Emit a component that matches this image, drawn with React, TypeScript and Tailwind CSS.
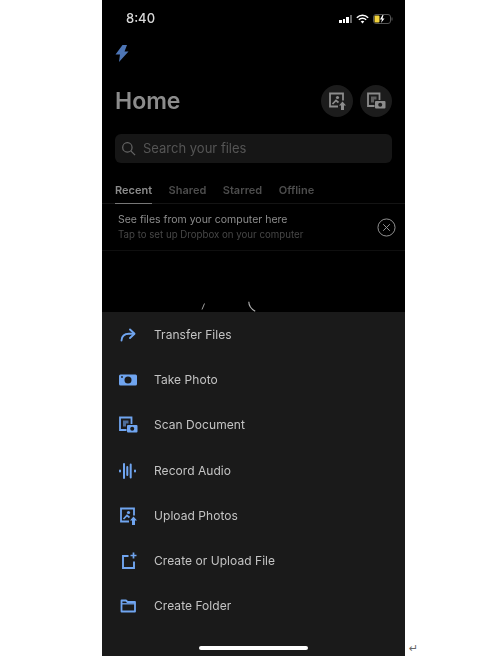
import type { ReactNode } from "react"

const BLUE = "#70a5f0"

function Svg({ children }: { children: ReactNode }) {
  return (
    <svg viewBox="0 0 20 20" fill="none" className="w-5 h-5">
      {children}
    </svg>
  )
}

function TransferIcon() {
  return (
    <Svg>
      <path d="M3.500 15.500C3.800 11 6.500 8.800 11 8.800h5" stroke={BLUE} strokeWidth="1.900" strokeLinecap="round" />
      <path d="M12 4.500 16.500 8.800 12 13" stroke={BLUE} strokeWidth="1.900" strokeLinecap="round" strokeLinejoin="round" />
    </Svg>
  )
}

function CameraIcon() {
  return (
    <Svg>
      <rect x="1" y="4.500" width="18" height="11" rx="1.500" fill={BLUE} />
      <circle cx="10" cy="10" r="3.500" fill="#1a1a1a" />
      <circle cx="4" cy="7" r="0.900" fill="#1a1a1a" />
    </Svg>
  )
}

function ScanIcon({ color = BLUE, hole = "#1a1a1a" }: { color?: string; hole?: string }) {
  return (
    <Svg>
      <path d="M8.500 15H2V2.500h11.500V9" stroke={color} strokeWidth="1.800" />
      <path d="M5 5.500h5.500v3H8v3H5Z" fill={color} opacity="0.6" />
      <rect x="9" y="10" width="10.500" height="7.500" rx="1" fill={color} />
      <circle cx="14.200" cy="13.800" r="2" fill={hole} />
    </Svg>
  )
}

function AudioIcon() {
  return (
    <Svg>
      <path d="M2 9.500v1M6 3v14M9.300 6v8M12.700 3.500v13M17 9.500v1" stroke={BLUE} strokeWidth="2" strokeLinecap="round" />
    </Svg>
  )
}

function UploadPhotoIcon({ color = BLUE }: { color?: string }) {
  return (
    <Svg>
      <path d="M11 15.500H3V2.500h13v7" stroke={color} strokeWidth="1.800" />
      <path d="M5.500 13 9 9.500l2.500 2" stroke={color} strokeWidth="1.700" />
      <circle cx="10.500" cy="6.500" r="1.600" fill={color} />
      <path d="M15.500 10.500 19 14.500h-2V19h-3v-4.500h-2Z" fill={color} />
    </Svg>
  )
}

function NewFileIcon() {
  return (
    <Svg>
      <path d="M10.500 5H5v12h11v-6.500" stroke={BLUE} strokeWidth="1.900" />
      <path d="M15.500 1.500v6M12.500 4.500h6" stroke={BLUE} strokeWidth="1.700" />
    </Svg>
  )
}

function FolderIcon() {
  return (
    <Svg>
      <path d="M3.500 4.500h4.500l1.500 1.500h7.500v9.500H3.500Z" stroke={BLUE} strokeWidth="1.800" strokeLinejoin="round" />
      <path d="M3.500 7.800h13.500" stroke={BLUE} strokeWidth="1.300" />
    </Svg>
  )
}

const actions = [
  { label: "Transfer Files", icon: <TransferIcon /> },
  { label: "Take Photo", icon: <CameraIcon /> },
  { label: "Scan Document", icon: <ScanIcon /> },
  { label: "Record Audio", icon: <AudioIcon /> },
  { label: "Upload Photos", icon: <UploadPhotoIcon /> },
  { label: "Create or Upload File", icon: <NewFileIcon /> },
  { label: "Create Folder", icon: <FolderIcon /> },
]

function StatusBar() {
  return (
    <div className="flex items-center justify-between h-[37px] pl-[24px] pr-[12px]">
      <span className="text-[13px] font-medium text-[#d8d8d8]">8:40</span>
      <div className="flex items-center gap-[4px] pt-[1px]">
        <div className="flex items-end gap-[1px] h-[8px]">
          <span className="w-[2.500px] h-[3px] bg-white" />
          <span className="w-[2.500px] h-[4px] bg-white" />
          <span className="w-[2.500px] h-[6px] bg-white" />
          <span className="w-[2.500px] h-[8px] bg-[#666]" />
        </div>
        <svg viewBox="0 0 16 12" className="w-[13px] h-[10px]" fill="none">
          <path d="M1 4.500c4-4 10-4 14 0M3.500 7c2.500-2.500 6.500-2.500 9 0" stroke="#fff" strokeWidth="1.800" />
          <path d="M8 11.500 5.800 9c1.200-1.100 3.200-1.100 4.400 0Z" fill="#fff" />
        </svg>
        <svg viewBox="0 0 20 10" className="w-[20px] h-[10px]" fill="none">
          <rect x="0.500" y="0.500" width="17" height="9" rx="2.500" stroke="#555" />
          <rect x="1.500" y="1.500" width="5" height="7" rx="1" fill="#f2d33c" />
          <path d="M9.500 1 7 5.500h2L8 9l3.500-4.500h-2L10.500 1Z" fill="#fff" />
          <rect x="18.500" y="3.500" width="1" height="3" fill="#555" />
        </svg>
      </div>
    </div>
  )
}

export default function App() {
  return (
    <div className="flex items-end w-[503px] h-[656px] bg-white overflow-hidden" style={{ fontFamily: "Inter, sans-serif" }}>
      <div className="flex flex-col w-[303px] h-full ml-[102px] blur-[0.4px]">
        {/* Dimmed home screen */}
        <div className="flex flex-col h-[312px] bg-black">
          <StatusBar />

          <div className="pl-[13px] pt-[8px]">
            <svg viewBox="0 0 14 17" className="w-[14px] h-[17px]">
              <path d="M7.500 0 0.500 9.500h4.500L4 17l9.500-10.500H9.500L12 0Z" fill="#4d75b5" />
            </svg>
          </div>

          <div className="flex items-center justify-between pl-[13px] pr-[13px] mt-[23px]">
            <h1 className="text-[23px] font-semibold leading-[32px] text-[#8c8c8c]">Home</h1>
            <div className="flex gap-[7px]">
              <div className="flex items-center justify-center w-[32px] h-[32px] rounded-full bg-[#1c1c1c]">
                <UploadPhotoIcon color="#8c8c8c" />
              </div>
              <div className="flex items-center justify-center w-[32px] h-[32px] rounded-full bg-[#1c1c1c]">
                <ScanIcon color="#8c8c8c" hole="#1c1c1c" />
              </div>
            </div>
          </div>

          <div className="flex items-center gap-[7px] h-[29px] mx-[13px] mt-[17px] px-[6px] rounded-[6px] bg-[#161616]">
            <svg viewBox="0 0 16 16" className="w-[15px] h-[15px]" fill="none">
              <circle cx="6.800" cy="6.800" r="5" stroke="#666" strokeWidth="1.300" />
              <path d="M10.500 10.500 15 15" stroke="#666" strokeWidth="1.300" />
            </svg>
            <span className="text-[13px] text-[#555]">Search your files</span>
          </div>

          <div className="flex gap-[16.500px] pl-[13px] mt-[17px] border-b border-[#141414] h-[24px]">
            <span className="h-[24px] text-[11px] font-semibold leading-[21px] text-[#8c8c8c] border-b border-[#777]">Recent</span>
            <span className="text-[11px] font-semibold leading-[21px] text-[#4d4d4d]">Shared</span>
            <span className="text-[11px] font-semibold leading-[21px] text-[#4d4d4d]">Starred</span>
            <span className="text-[11px] font-semibold leading-[21px] text-[#4d4d4d]">Offline</span>
          </div>

          <div className="flex items-center justify-between h-[47px] pl-[16px] pr-[9px] border-b border-[#0f0f0f]">
            <div className="flex flex-col gap-[1px]">
              <span className="text-[10.500px] leading-[15px] text-[#8c8c8c]">See files from your computer here</span>
              <span className="text-[9.700px] leading-[14px] text-[#474747]">Tap to set up Dropbox on your computer</span>
            </div>
            <svg viewBox="0 0 20 20" className="w-[19px] h-[19px]" fill="none">
              <circle cx="10" cy="10" r="9" stroke="#999" strokeWidth="1" />
              <path d="M6.500 6.500l7 7M13.500 6.500l-7 7" stroke="#999" strokeWidth="1" />
            </svg>
          </div>

          <div className="flex-1 flex items-end gap-[42px] pl-[99px]">
            <svg viewBox="0 0 10 12" className="w-[5px] h-[11px]" fill="none">
              <path d="M7 0 2 12" stroke="#b0b0b0" strokeWidth="1.800" />
            </svg>
            <svg viewBox="0 0 10 12" className="w-[8px] h-[11px]" fill="none">
              <path d="M1 0c0 5 3 9 8 12" stroke="#b0b0b0" strokeWidth="1.400" />
            </svg>
          </div>
        </div>

        {/* Action sheet */}
        <div className="relative flex flex-col h-[344px] bg-[#1a1a1a]">
          {actions.map((action) => (
            <div key={action.label} className="flex items-center h-[45.300px] pl-[16px]">
              <span className="flex items-center justify-center w-[20px] h-[20px] mr-[16px]">{action.icon}</span>
              <span className="text-[12px] tracking-[0.050px] text-[#c4c4c4]">{action.label}</span>
            </div>
          ))}
          {/* Home indicator */}
          <div className="absolute left-[97px] bottom-[6px] w-[109px] h-[4px] rounded-full bg-white" />
        </div>
      </div>
      <span className="ml-[4px] mb-[1px] text-[11px] leading-[12px] text-[#666]" style={{ fontFamily: "'DejaVu Sans', sans-serif" }}>↵</span>
    </div>
  )
}
